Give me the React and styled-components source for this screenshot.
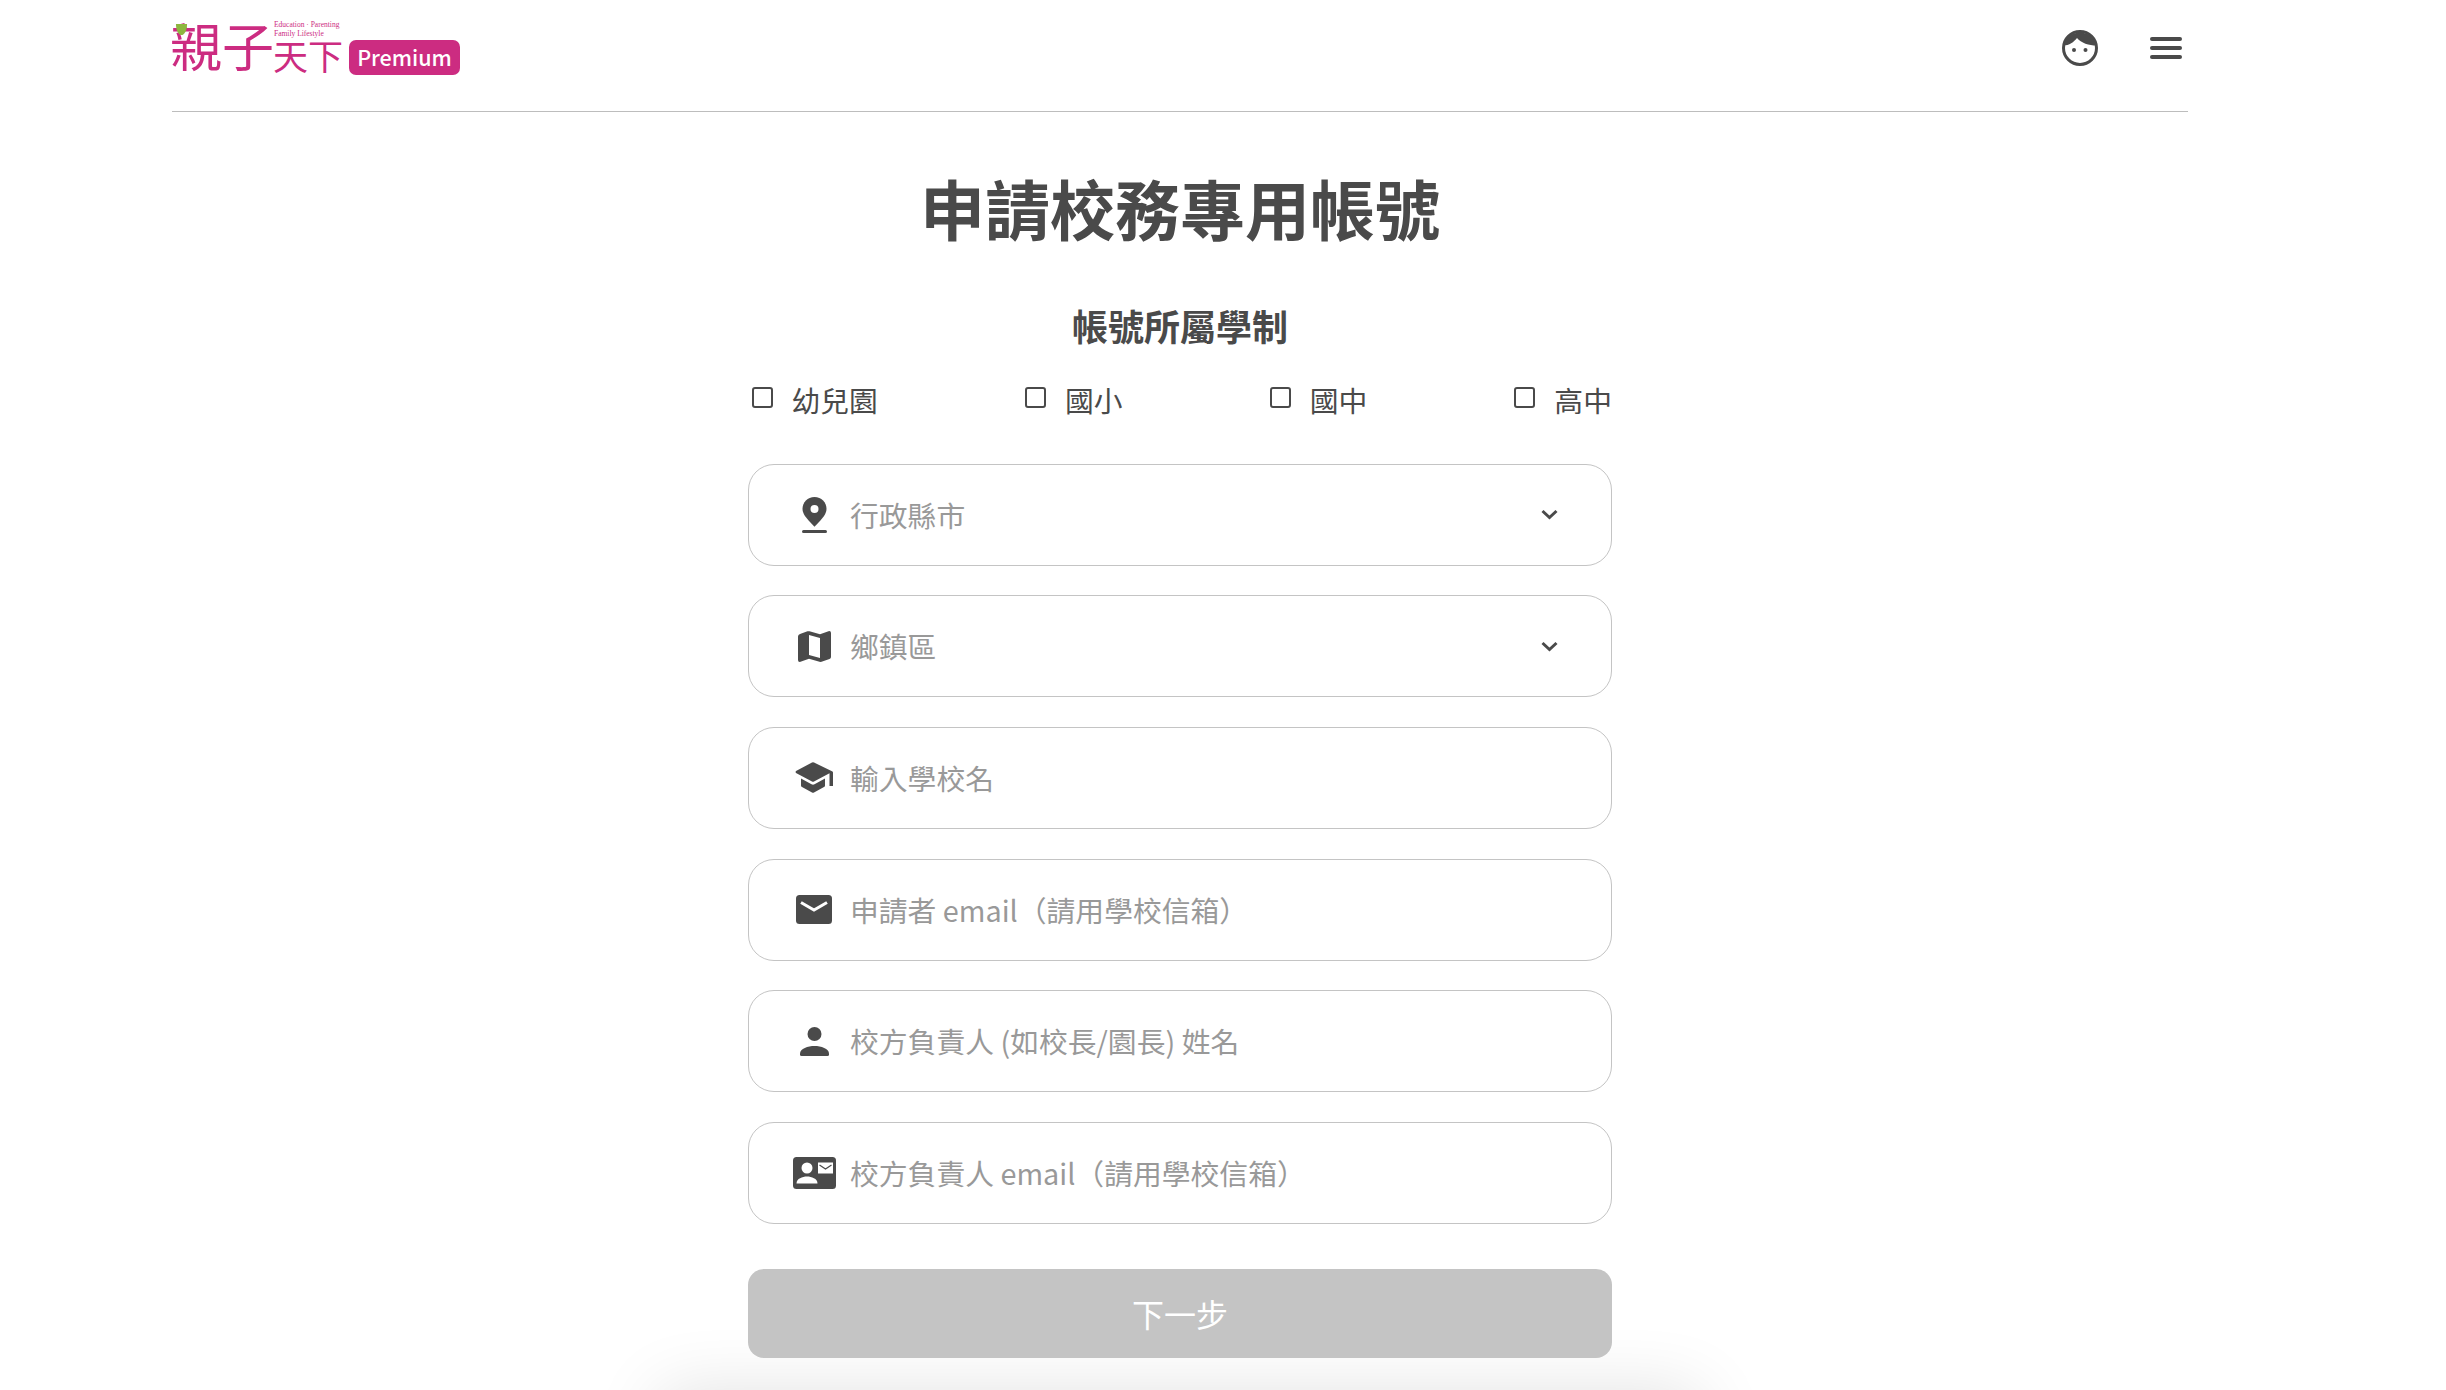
import React from 'react';
import styled, { createGlobalStyle } from 'styled-components';

const DARK = '#4a4a4a';
const LINE = '#c4c4c4';
const MAGENTA = '#cc2c81';

const GlobalStyle = createGlobalStyle`
  html, body {
    margin: 0;
    background: #fff;
    font-family: "Noto Sans CJK TC", "Noto Sans", sans-serif;
  }
`;

const Page = styled.div`
  position: relative;
  width: 100%;
  height: 1390px;
  overflow: hidden;
  padding-left: 172px;
  box-sizing: border-box;
`;

const Container = styled.div`
  position: relative;
  z-index: 1;
  width: 2016px;
`;

// the shadow of something sitting just below the fold
const BottomGlow = styled.div`
  position: absolute;
  left: 670px;
  top: 1402px;
  width: 1020px;
  height: 100px;
  box-shadow: 0 0 70px 10px rgba(0, 0, 0, 0.12);
`;

const Header = styled.header`
  display: flex;
  justify-content: space-between;
  height: 112px;
  box-sizing: border-box;
  border-bottom: 1px solid #bdbdbd;
  padding: 15px 6px 0 0;
`;

const Logo = styled.a`
  display: flex;
  align-items: flex-end;
  height: 60px;
  color: ${MAGENTA};
`;

const LogoBig = styled.span`
  position: relative;
  font-size: 52px;
  line-height: 60px;
  font-weight: 400;
  width: 104px;
  margin-left: -2px;
  white-space: nowrap;
`;

const LogoSeed = styled.svg`
  position: absolute;
  left: 5px;
  top: 8px;
  width: 13px;
  height: 13px;
`;

const LogoSide = styled.span`
  display: flex;
  flex-direction: column;
  width: 75px;
`;

const Tagline = styled.span`
  font-family: "Liberation Serif", serif;
  font-size: 7.5px;
  line-height: 9px;
  white-space: nowrap;
`;

const LogoSmall = styled.span`
  font-size: 35px;
  line-height: 34px;
  font-weight: 400;
  white-space: nowrap;
  margin-left: -1px;
  padding-bottom: 3px;
`;

const Badge = styled.span`
  display: flex;
  align-items: center;
  justify-content: center;
  width: 111px;
  height: 35px;
  padding-bottom: 2px;
  box-sizing: border-box;
  border-radius: 7px;
  background: ${MAGENTA};
  color: #fff;
  font-size: 21.5px;
  line-height: 30px;
  font-weight: 500;
`;

const HeaderIcons = styled.div`
  display: flex;
  align-items: center;
  gap: 52px;
  height: 66px;
`;

const Burger = styled.div`
  display: flex;
  flex-direction: column;
  gap: 5.5px;
  width: 32px;

  & i {
    height: 3.5px;
    border-radius: 2px;
    background: ${DARK};
  }
`;

const Form = styled.main`
  width: 864px;
  margin: 0 auto;
  display: flex;
  flex-direction: column;
  color: ${DARK};
`;

const Title = styled.h1`
  margin: 55px 0 0;
  font-size: 65px;
  line-height: 80px;
  font-weight: 700;
  text-align: center;
`;

const SubTitle = styled.h2`
  margin: 53.5px 0 0;
  font-size: 36px;
  line-height: 48px;
  font-weight: 700;
  text-align: center;
`;

const CheckRow = styled.div`
  display: flex;
  justify-content: space-between;
  margin: 31px 0 44px;
  height: 40px;
`;

const CheckItem = styled.label`
  display: flex;
  align-items: center;
  font-size: 28.8px;
  line-height: 40px;
`;

const Check = styled.input.attrs({ type: 'checkbox' })`
  appearance: none;
  box-sizing: border-box;
  width: 21px;
  height: 21px;
  margin: -4px 19px 0 3.5px;
  border: 2.5px solid ${DARK};
  border-radius: 3px;
  background: #fff;
`;

const Fields = styled.div`
  display: grid;
  grid-auto-rows: 102px;
  row-gap: 29.7px;
`;

const Field = styled.div`
  display: flex;
  align-items: center;
  box-sizing: border-box;
  padding: 0 53px 0 43px;
  border: 1px solid ${LINE};
  border-radius: 26px;
  background: #fff;
`;

const IconSlot = styled.span`
  display: flex;
  align-items: center;
  justify-content: center;
  flex: none;
  width: 44px;
  margin-right: 14px;
  color: ${DARK};
`;

const Placeholder = styled.span`
  flex: 1;
  font-size: 28.8px;
  line-height: 40px;
  color: #999;
  white-space: nowrap;
`;

const NextButton = styled.button`
  height: 89px;
  margin-top: 45px;
  border: none;
  border-radius: 16px;
  background: ${LINE};
  color: #fff;
  font-family: inherit;
  font-size: 32px;
  line-height: 40px;
`;

const FaceIcon = () => (
  <svg width="36" height="36" viewBox="0 0 36 36">
    <circle cx="18" cy="18" r="16.5" fill="#fff" stroke={DARK} strokeWidth="3" />
    <path d="M1.5 15.5A17 17 0 0 1 34.5 15.5C27 15.5 19 13 15 8C12 12 7 15.5 1.5 15.5Z" fill={DARK} />
    <circle cx="12" cy="20" r="2" fill={DARK} />
    <circle cx="23.5" cy="20" r="2" fill={DARK} />
  </svg>
);

const PinIcon = () => (
  <svg width="25" height="36" viewBox="0 0 25 36">
    <path d="M12.5 0C5.6 0 .5 5.2.5 11.8c0 4.8 3 9 12 18 9-9 12-13.2 12-18C24.500 5.200 19.400 0 12.500 0Z" fill="currentColor" />
    <circle cx="12.5" cy="12" r="4" fill="#fff" />
    <rect x="0" y="33" width="25" height="3" rx="1.500" fill="currentColor" />
  </svg>
);

const MapIcon = () => (
  <svg width="33" height="31" viewBox="0 0 33 31">
    <path d="M2 3 9.500.3Q10.500 0 11.500.3L22 3.200 30.500.2Q33 -.3 33 2V26Q33 27.500 31.500 28L23.500 30.800Q22.500 31 21.500 30.800L11 27.800 2.500 30.800Q0 31.300 0 29V5.500Q0 3.700 2 3Z" fill="currentColor" />
    <path d="M11 4 22 7V27L11 24Z" fill="#fff" />
  </svg>
);

const CapIcon = () => (
  <svg width="38" height="31" viewBox="0 0 38 31">
    <path d="M17 .4 1 9Q0 10 1 11L17 19.600Q18 20 19 19.600L34.500 11.200V24H38V10.500Q38 9.800 37 9.200L19 .4Q18 0 17 .4Z" fill="currentColor" />
    <path d="M6 16.500V23.500Q6 24.500 7 25L17 30.600Q18 31 19 30.600L29 25Q30 24.500 30 23.500V16.500L19.500 22.300Q18 23 16.500 22.300Z" fill="currentColor" />
  </svg>
);

const MailIcon = () => (
  <svg width="36" height="29" viewBox="0 0 36 29">
    <rect width="36" height="29" rx="3.500" fill="currentColor" />
    <path d="M5 7.500 18 15 31 7.500" fill="none" stroke="#fff" strokeWidth="3" />
  </svg>
);

const PersonIcon = () => (
  <svg width="29" height="29" viewBox="0 0 29 29">
    <circle cx="14.500" cy="7" r="7" fill="currentColor" />
    <path d="M0 26.500C0 21.500 8 19 14.500 19S29 21.500 29 26.500V27.500Q29 29 27.500 29H1.500Q0 29 0 27.500Z" fill="currentColor" />
  </svg>
);

const ContactIcon = () => (
  <svg width="43" height="32" viewBox="0 0 43 32">
    <rect width="43" height="32" rx="3.500" fill="currentColor" />
    <circle cx="14" cy="11" r="5.500" fill="#fff" />
    <path d="M3.500 26.500C3.500 21.500 9.500 19.500 14 19.500S24.500 21.500 24.500 26.500Z" fill="#fff" />
    <rect x="25" y="5.500" width="15" height="11" fill="#fff" />
    <path d="M26.500 8 32.500 12 38.500 8" fill="none" stroke={DARK} strokeWidth="1.200" />
  </svg>
);

const ChevronIcon = () => (
  <svg width="17" height="11" viewBox="0 0 17 11">
    <path d="M1.500 2 8.500 8.500 15.500 2" fill="none" stroke={DARK} strokeWidth="3" />
  </svg>
);

const LEVELS = ['幼兒園', '國小', '國中', '高中'];

const FIELDS = [
  { icon: <PinIcon />, text: '行政縣市', select: true },
  { icon: <MapIcon />, text: '鄉鎮區', select: true },
  { icon: <CapIcon />, text: '輸入學校名' },
  { icon: <MailIcon />, text: '申請者 email（請用學校信箱）' },
  { icon: <PersonIcon />, text: '校方負責人 (如校長/園長) 姓名' },
  { icon: <ContactIcon />, text: '校方負責人 email（請用學校信箱）' },
];

export default function App() {
  return (
    <Page>
      <GlobalStyle />
      <BottomGlow />
      <Container>
        <Header>
          <Logo>
            <LogoBig>
              親子
              <LogoSeed viewBox="0 0 14 14">
                <path d="M1 1H13C13 8 10 13 7 13S1 8 1 1Z" fill="#8db73f" />
              </LogoSeed>
            </LogoBig>
            <LogoSide>
              <Tagline>Education · Parenting<br />Family Lifestyle</Tagline>
              <LogoSmall>天下</LogoSmall>
            </LogoSide>
            <Badge>Premium</Badge>
          </Logo>
          <HeaderIcons>
            <FaceIcon />
            <Burger><i /><i /><i /></Burger>
          </HeaderIcons>
        </Header>
        <Form>
          <Title>申請校務專用帳號</Title>
          <SubTitle>帳號所屬學制</SubTitle>
          <CheckRow>
            {LEVELS.map((level) => (
              <CheckItem key={level}>
                <Check />
                {level}
              </CheckItem>
            ))}
          </CheckRow>
          <Fields>
            {FIELDS.map((field) => (
              <Field key={field.text}>
                <IconSlot>{field.icon}</IconSlot>
                <Placeholder>{field.text}</Placeholder>
                {field.select && <ChevronIcon />}
              </Field>
            ))}
          </Fields>
          <NextButton>下一步</NextButton>
        </Form>
      </Container>
    </Page>
  );
}
